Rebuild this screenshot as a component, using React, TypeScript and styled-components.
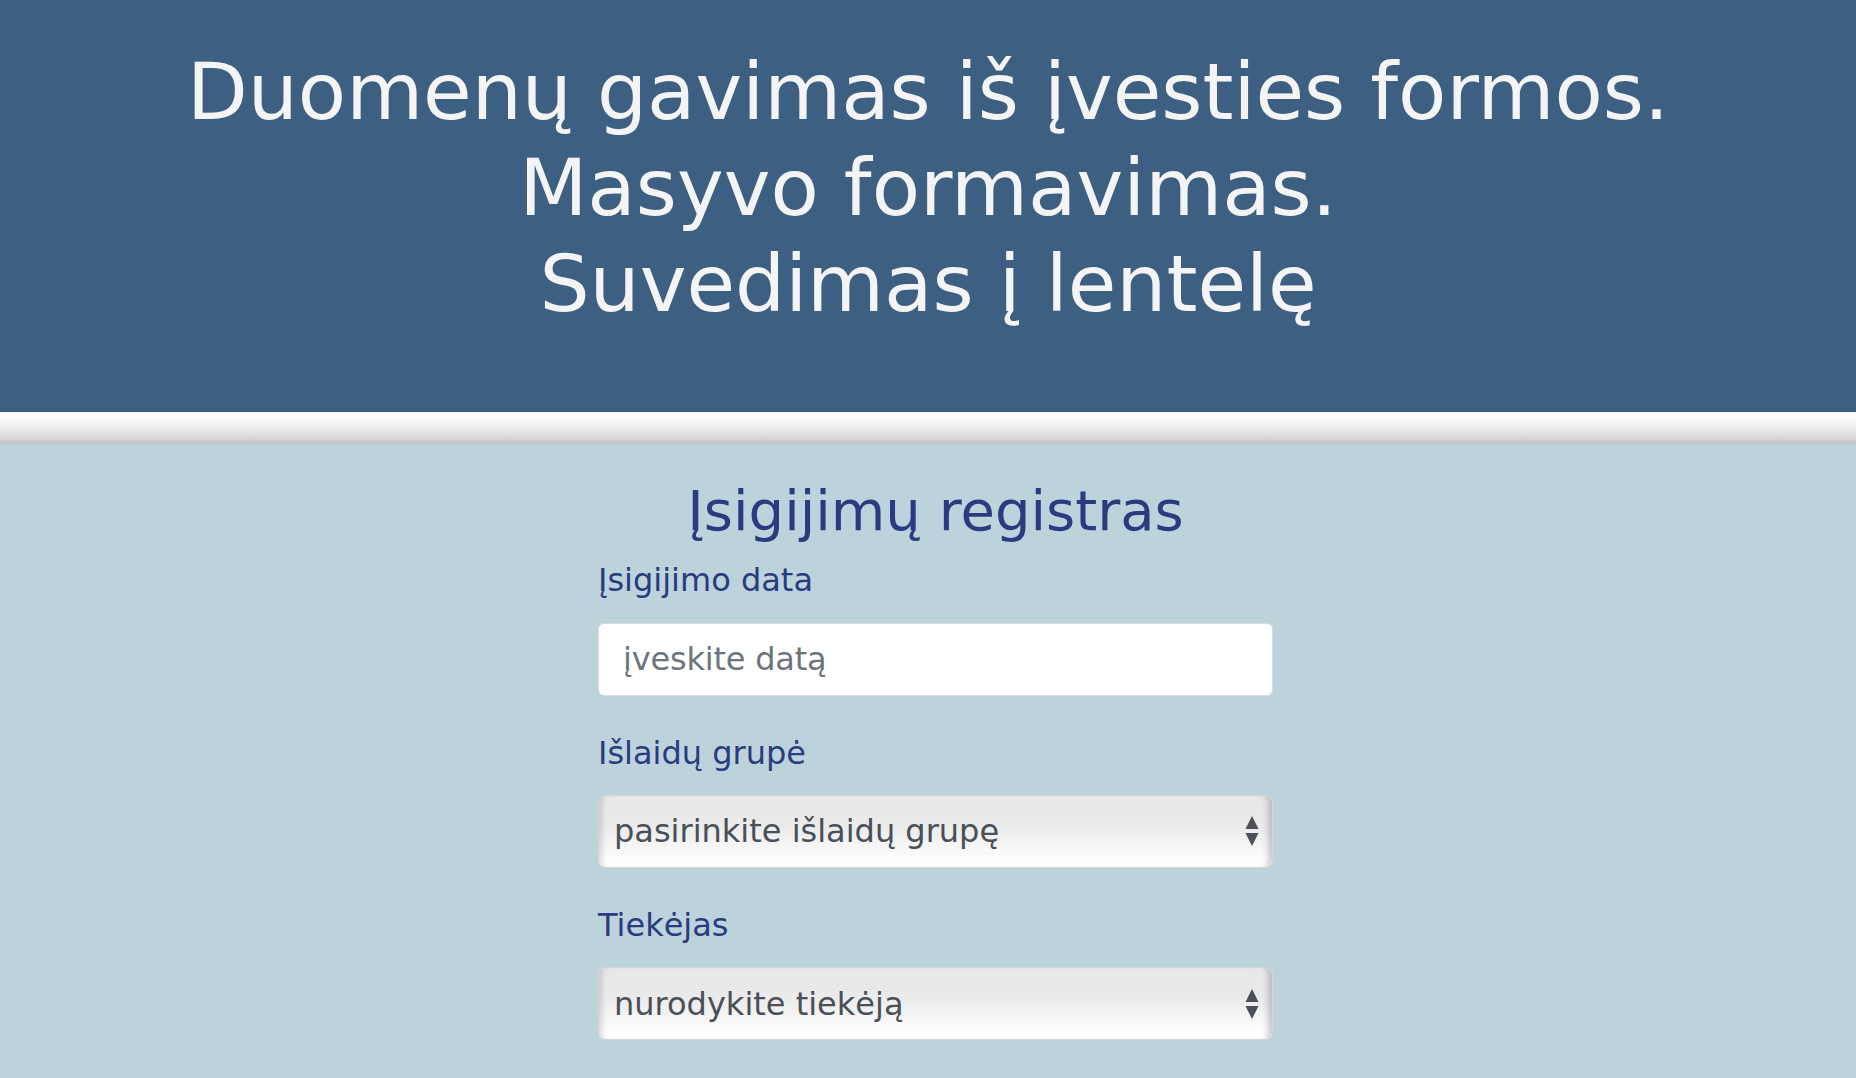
import React from "react";
import styled, { createGlobalStyle } from "styled-components";

const GlobalStyle = createGlobalStyle`
  html, body {
    margin: 0;
    padding: 0;
    background: #bdd3dc;
  }
  body {
    font-family: "DejaVu Sans", "Noto Sans", sans-serif;
  }
  * { box-sizing: border-box; }
`;

const Page = styled.div`
  min-height: 1078px;
  background: #bdd3dc;
  display: flex;
  flex-direction: column;
`;

const Header = styled.header`
  background: #3d5f82;
  padding: 44px 0 80px;
  display: flex;
  justify-content: center;
`;

const HeaderTitle = styled.h1`
  margin: 0;
  color: #f4f4f4;
  font-family: "DejaVu Sans", sans-serif;
  font-weight: 400;
  font-size: 79px;
  line-height: 96px;
  text-align: center;
  letter-spacing: 0;
`;

const Divider = styled.div`
  height: 32px;
  background: linear-gradient(
    to bottom,
    #ffffff 0%,
    #fbfbfb 20%,
    #ececec 50%,
    #d8d8d8 80%,
    #c3c3c3 100%
  );
`;

const Main = styled.main`
  display: flex;
  justify-content: center;
  padding-left: 15px;
`;

const Form = styled.form`
  width: 675px;
  display: flex;
  flex-direction: column;
  padding-top: 33px;
`;

const FormTitle = styled.h2`
  margin: 0 0 17px;
  color: #2a3b7f;
  font-family: "DejaVu Sans", sans-serif;
  font-weight: 400;
  font-size: 56px;
  line-height: 1.2;
  text-align: center;
  letter-spacing: 0;
`;

const Group = styled.div`
  display: flex;
  flex-direction: column;
  margin-bottom: 38px;
`;

const Label = styled.label`
  color: #2a3b7f;
  font-family: "DejaVu Sans", sans-serif;
  font-size: 32px;
  line-height: 1.2;
  margin-bottom: 23px;
  letter-spacing: 0;
`;

const TextInput = styled.input`
  height: 73px;
  width: 100%;
  border: 1px solid #d4dde1;
  border-radius: 6px;
  background: #ffffff;
  padding: 0 24px;
  font-family: "DejaVu Sans", sans-serif;
  font-size: 32px;
  letter-spacing: -0.2px;
  color: #495057;
  outline: none;
  &::placeholder {
    color: #6c757d;
  }
`;

const SelectWrap = styled.div`
  position: relative;
  height: 73px;
`;

const Select = styled.select`
  appearance: none;
  -webkit-appearance: none;
  width: 100%;
  height: 73px;
  border: 1px solid #d3d6d8;
  border-radius: 7px;
  padding: 0 50px 0 15px;
  font-family: "DejaVu Sans", sans-serif;
  font-size: 32px;
  letter-spacing: 0;
  color: #495057;
  background: linear-gradient(
    to bottom,
    #e7e7e7 0%,
    #eaeaea 40%,
    #f3f3f3 65%,
    #fcfcfc 85%,
    #ffffff 100%
  );
  box-shadow: inset 7px 0 6px -5px rgba(0, 0, 0, 0.18),
    inset -9px 0 6px -5px rgba(0, 0, 0, 0.2);
  outline: none;
`;

const Arrows = styled.svg`
  position: absolute;
  right: 14px;
  top: 50%;
  transform: translateY(-50%);
  pointer-events: none;
`;

const SelectArrows = () => (
  <Arrows width="14" height="30" viewBox="0 0 14 30">
    <polygon points="7,0 13.5,13 0.5,13" fill="#4a5056" />
    <polygon points="0.5,17 13.5,17 7,30" fill="#4a5056" />
  </Arrows>
);

export default function App() {
  return (
    <>
      <GlobalStyle />
      <Page>
        <Header>
          <HeaderTitle>
            Duomenų gavimas iš įvesties formos.
            <br />
            Masyvo formavimas.
            <br />
            Suvedimas į lentelę
          </HeaderTitle>
        </Header>
        <Divider />
        <Main>
          <Form onSubmit={(e) => e.preventDefault()}>
            <FormTitle>Įsigijimų registras</FormTitle>
            <Group>
              <Label htmlFor="data">Įsigijimo data</Label>
              <TextInput id="data" type="text" placeholder="įveskite datą" />
            </Group>
            <Group>
              <Label htmlFor="grupe">Išlaidų grupė</Label>
              <SelectWrap>
                <Select id="grupe" defaultValue="">
                  <option value="">pasirinkite išlaidų grupę</option>
                  <option value="1">Kanceliarinės prekės</option>
                  <option value="2">Transportas</option>
                </Select>
                <SelectArrows />
              </SelectWrap>
            </Group>
            <Group>
              <Label htmlFor="tiekejas">Tiekėjas</Label>
              <SelectWrap>
                <Select id="tiekejas" defaultValue="">
                  <option value="">nurodykite tiekėją</option>
                  <option value="1">UAB „Tiekėjas“</option>
                </Select>
                <SelectArrows />
              </SelectWrap>
            </Group>
          </Form>
        </Main>
      </Page>
    </>
  );
}
